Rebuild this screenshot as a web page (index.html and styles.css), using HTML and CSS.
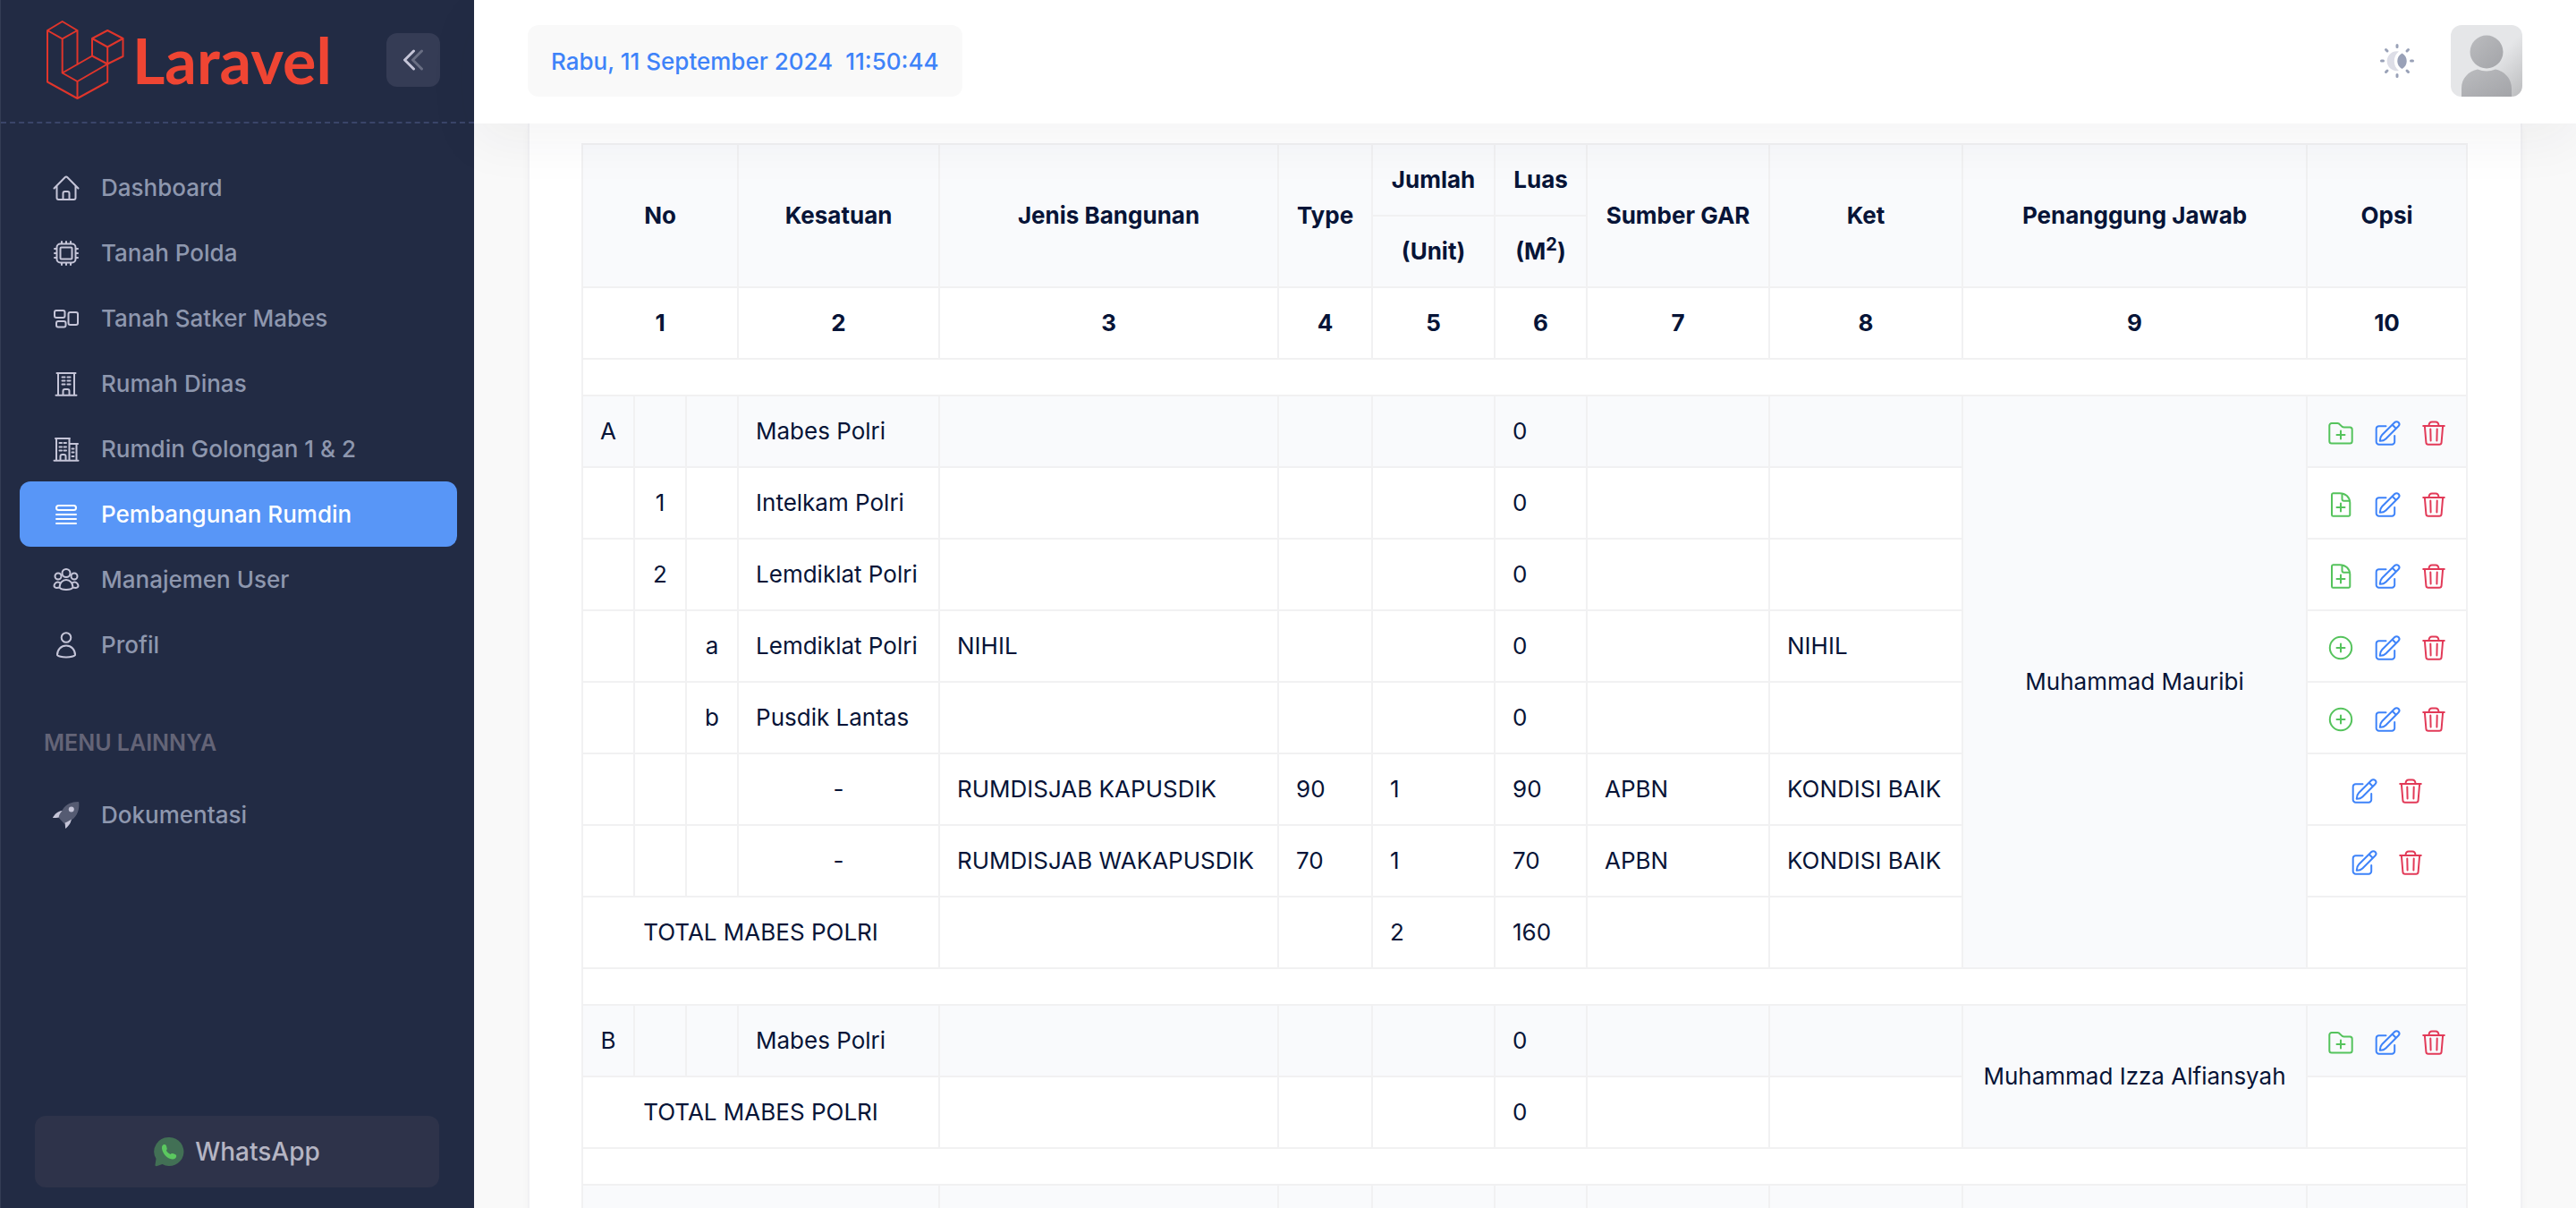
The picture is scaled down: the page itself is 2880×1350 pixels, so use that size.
FILE: index.html
```html
<!DOCTYPE html>
<html lang="id">
<head>
    <meta charset="utf-8">
    <meta name="viewport" content="width=device-width, initial-scale=1">
    <title>Pembangunan Rumdin</title>
    <link rel="stylesheet" href="styles.css">
</head>
<body>
    <!-- icon set -->
    <svg class="sprite" aria-hidden="true">
        <symbol id="i-home" viewBox="0 0 32 32"><path d="M2.5 16.5 14.6 4.2a2 2 0 0 1 2.8 0L29.5 16.500M5.500 14v13a2 2 0 0 0 2 2h17a2 2 0 0 0 2-2V14M12.500 29v-7a2 2 0 0 1 2-2h3a2 2 0 0 1 2 2v7"/></symbol>
        <symbol id="i-chip" viewBox="0 0 32 32"><rect x="5.5" y="5.5" width="21" height="21" rx="4"/><rect x="9.5" y="9.5" width="13" height="13" rx="1"/><path d="M11 5V3M16 5V3M21 5V3M11 29v-2M16 29v-2M21 29v-2M5 11H3M5 16H3M5 21H3M29 11h-2M29 16h-2M29 21h-2"/></symbol>
        <symbol id="i-category" viewBox="0 0 32 32"><rect x="3" y="7" width="11.5" height="8" rx="2"/><rect x="5" y="19" width="10.5" height="6.5" rx="2"/><rect x="18.5" y="9" width="10.5" height="14" rx="2"/></symbol>
        <symbol id="i-building" viewBox="0 0 32 32"><path d="M5.5 4h21M7 4v24.500M25 4v24.500M4.500 28.700h23M12.500 28v-4a2 2 0 0 1 2-2h3a2 2 0 0 1 2 2v4M11.500 8.500h3M11.500 12.500h3M11.500 16.500h3M17.500 8.500h3M17.500 12.500h3M17.500 16.500h3"/></symbol>
        <symbol id="i-buildings" viewBox="0 0 32 32"><path d="M4 4h16M5 4v24.500M19.500 4v24.500M19.500 10H29M27.500 10v18.500M2.500 28.700h27M9.500 28v-4a2 2 0 0 1 2-2h2a2 2 0 0 1 2 2v4M8.500 9h2.500M8.500 13.500h2.500M8.500 17.500h2.500M13.500 9h2.500M13.500 13.500h2.500M13.500 17.500h2.500M22.500 15.500h2M22.500 19.500h2M22.500 24h2"/></symbol>
        <symbol id="i-menu" viewBox="0 0 32 32"><rect x="5" y="6" width="22" height="5" rx="2.5"/><path d="M5 16h22M5 21h22M5 26h22"/></symbol>
        <symbol id="i-people" viewBox="0 0 32 32"><circle cx="16" cy="8.500" r="4.500"/><circle cx="7" cy="12" r="3.500"/><circle cx="25" cy="12" r="3.500"/><path d="M8.500 24.500c0-5 3.500-8.500 7.500-8.500s7.500 3.500 7.500 8.500c-2 3.300-13 3.300-15 0zM8.500 24.500c-3 .8-5.500 0-6-1.500 0-2.500 2-4.500 4-4.500 1.300 0 2.300.5 3 1.300M23.500 24.500c3 .8 5.500 0 6-1.500 0-2.500-2-4.500-4-4.500-1.300 0-2.300.5-3 1.300"/></symbol>
        <symbol id="i-user" viewBox="0 0 32 32"><circle cx="16" cy="7.500" r="5.300"/><path d="M6 27c0-6 4.300-10.500 10-10.500S26 21 26 27c-3 3.200-17 3.200-20 0z"/></symbol>
        <symbol id="i-rocket" viewBox="0 0 36 36"><path class="soft" d="M34 2c.8 8-1.500 17-9 22-2 1.500-4 2.800-6.500 4.500-1.500 1-2.500.5-3.500-.5l-6.500-7c-.8-1-.8-2 0-3l5-7C18 4 25 1.300 32.500 1.200c1 0 1.400.2 1.500.8z"/><circle class="solid" cx="24.500" cy="10.800" r="3.400"/><path class="solid" d="M13 12.500c-6 .5-9.500 4.500-12 9 3 0 6-.5 7.500-.5.300-3.500 2.500-6 4.500-8.500zM24.500 23c-.5 5.500-4.500 9.500-7.500 12 0-3-.5-5-.5-7.300C19.500 26.500 22 25 24.500 23z"/></symbol>
        <symbol id="i-folder" viewBox="0 0 32 32"><path d="M6 5h6.500c3 0 3.500 4.500 7 4.500h6.700A2.500 2.500 0 0 1 28.700 12v13a2.500 2.500 0 0 1-2.500 2.500H5.800A2.500 2.500 0 0 1 3.300 25V7.500A2.500 2.500 0 0 1 6 5zM16 13.500v9M11.500 18h9"/></symbol>
        <symbol id="i-file" viewBox="0 0 32 32"><path d="M7.500 3.200h7.500c6 0 11 4 11.300 10.500v13.500a1.600 1.600 0 0 1-1.600 1.600H7.500A1.600 1.600 0 0 1 6 27.200V4.800a1.600 1.600 0 0 1 1.500-1.600zM17.500 3.700v6a2 2 0 0 0 2 2h5.800M16 14.500v9M11.500 19h9"/></symbol>
        <symbol id="i-plus" viewBox="0 0 32 32"><circle cx="16" cy="16" r="12.200"/><path d="M16 11.500v9M11.500 16h9"/></symbol>
        <symbol id="i-edit" viewBox="0 0 32 32"><path d="M14.500 8.200H6.700a3 3 0 0 0-3 3v14.500a3 3 0 0 0 3 3h14.500a3 3 0 0 0 3-3V19M7.700 24.700c0-3 1-5.200 2.500-6.700L24.300 4a2.900 2.900 0 0 1 4.200 4.200L14.300 22.500c-1.700 1.700-3.600 2.300-6.600 2.200zM21.700 6.800l4 4"/></symbol>
        <symbol id="i-trash" viewBox="0 0 32 32"><path d="M4.200 8h23.600M10.500 7.500c.2-2.500 1.300-4 3.500-4h4c2.200 0 3.300 1.500 3.500 4M5.900 8.500l1.500 18a2.500 2.500 0 0 0 2.500 2.300h12.200a2.500 2.500 0 0 0 2.500-2.300l1.500-18M12.300 11.500l.3 13M19.700 11.500l-.3 13"/></symbol>
    </svg>

    <div class="app">
        <aside class="sidebar">
            <div class="sidebar-logo">
                <a href="#" class="brand">
                    <svg class="brand-mark" viewBox="52 22 88 90" aria-hidden="true">
                        <path d="M69.700 24 86.500 34 69.700 43.300 53 34zM53 34v57.500L86.500 110 120.200 91.500V52.500M69.700 43.300v38.200L86.500 91v19M86.500 91l33.700-19.500M69.700 81.500 103 62.500l17.200 9 17.300-8.500V43M86.500 34v38M120.200 34 137.500 43l-17.300 9.500L103 43zM103 43v19.500"/>
                    </svg>
                    <span class="brand-name">Laravel</span>
                </a>
                <button type="button" class="toggle" aria-label="Toggle sidebar">
                    <svg viewBox="0 0 24 24" aria-hidden="true"><path class="far" d="M21.500 2l-10 10 10 10"/><path class="near" d="M12.500 2 2.500 12l10 10"/></svg>
                </button>
            </div>

            <nav class="menu">
                <a href="#" class="menu-link"><svg class="icon"><use href="#i-home"/></svg>Dashboard</a>
                <a href="#" class="menu-link"><svg class="icon"><use href="#i-chip"/></svg>Tanah Polda</a>
                <a href="#" class="menu-link"><svg class="icon"><use href="#i-category"/></svg>Tanah Satker Mabes</a>
                <a href="#" class="menu-link"><svg class="icon"><use href="#i-building"/></svg>Rumah Dinas</a>
                <a href="#" class="menu-link"><svg class="icon"><use href="#i-buildings"/></svg>Rumdin Golongan 1 &amp; 2</a>
                <a href="#" class="menu-link active" aria-current="page"><svg class="icon"><use href="#i-menu"/></svg>Pembangunan Rumdin</a>
                <a href="#" class="menu-link"><svg class="icon"><use href="#i-people"/></svg>Manajemen User</a>
                <a href="#" class="menu-link"><svg class="icon"><use href="#i-user"/></svg>Profil</a>
                <h2 class="menu-heading">MENU LAINNYA</h2>
                <a href="#" class="menu-link"><svg class="icon rocket"><use href="#i-rocket"/></svg>Dokumentasi</a>
            </nav>

            <a href="#" class="whatsapp">
                <svg viewBox="0 0 34 34" aria-hidden="true">
                    <path class="bubble" d="M17.500 1a16 16 0 1 1-8 29.900L3 33.200c-1.200.3-1.800-.5-1.500-1.700l1-6.500A16 16 0 0 1 17.500 1z"/>
                    <path class="phone" d="M9 13.500c-.3-3 1-4.500 2.700-4.500 1.200 0 2 .5 2.300 1.800l.7 2.600c.2.800-.3 1.500-.8 2.200.8 2 2.400 3.500 4.600 4.400.8-1 1.700-1.200 2.700-.9l2.600 1c1.300.6 1.700 1.700 1.200 3-.6 1.700-2.300 2.700-4.500 2.400-5.700-.8-10.600-6-11.500-12z"/>
                </svg>
                WhatsApp
            </a>
        </aside>

        <div class="page">
            <header class="topbar">
                <div class="clock"><span>Rabu, 11 September 2024</span><span>11:50:44</span></div>
                <div class="topbar-tools">
                    <button type="button" class="theme" aria-label="Theme mode">
                        <svg viewBox="0 0 40 40" aria-hidden="true">
                            <path class="moon" d="M22 9.500a11 11 0 1 0 0 21.500c-7-5-7-16.500 0-21.500z"/>
                            <path class="core" d="M25.500 11.500c7 4 7 13.500 0 17.500-7-4-7-13.500 0-17.500z"/>
                            <path class="rays" d="M20 2.500v2M20 35.500v2M2.500 20h2M35.500 20h2M7.500 7.500l1.500 1.500M31 31l1.500 1.500M32.500 7.500 31 9M9 31l-1.500 1.500"/>
                        </svg>
                    </button>
                    <button type="button" class="avatar" aria-label="Akun">
                        <svg viewBox="0 0 80 80" aria-hidden="true">
                            <defs>
                                <linearGradient id="avatar-bg" x2="1" y2="1"><stop offset=".55" stop-color="#e5e6e8"/><stop offset="1" stop-color="#bbbcbe"/></linearGradient>
                                <linearGradient id="avatar-fg" x2="1" y2="1"><stop offset="0" stop-color="#bbbcbf"/><stop offset="1" stop-color="#a3a4a8"/></linearGradient>
                            </defs>
                            <rect width="80" height="80" fill="url(#avatar-bg)"/>
                            <circle cx="40" cy="30" r="18.500" fill="url(#avatar-fg)"/>
                            <path d="M30 49.500q10 4 20 0c10 2 18 10 18 21V80H12v-9.500c0-11 8-19 18-21z" fill="url(#avatar-fg)"/>
                        </svg>
                    </button>
                </div>
            </header>

            <main class="card">
                <table class="report">
                    <colgroup>
                        <col class="c-no"><col class="c-no"><col class="c-no">
                        <col class="c-kesatuan"><col class="c-jenis"><col class="c-type">
                        <col class="c-jumlah"><col class="c-luas"><col class="c-sumber">
                        <col class="c-ket"><col class="c-pj"><col class="c-opsi">
                    </colgroup>
                    <thead>
                        <tr class="shade">
                            <th colspan="3" rowspan="2">No</th>
                            <th rowspan="2">Kesatuan</th>
                            <th rowspan="2">Jenis Bangunan</th>
                            <th rowspan="2">Type</th>
                            <th>Jumlah</th>
                            <th>Luas</th>
                            <th rowspan="2">Sumber GAR</th>
                            <th rowspan="2">Ket</th>
                            <th rowspan="2">Penanggung Jawab</th>
                            <th rowspan="2">Opsi</th>
                        </tr>
                        <tr class="shade"><th>(Unit)</th><th>(M<sup>2</sup>)</th></tr>
                        <tr>
                            <th colspan="3">1</th><th>2</th><th>3</th><th>4</th><th>5</th>
                            <th>6</th><th>7</th><th>8</th><th>9</th><th>10</th>
                        </tr>
                    </thead>
                    <tbody>
                        <tr class="spacer"><td colspan="12"></td></tr>
                        <tr class="shade">
                            <td class="mid">A</td><td></td><td></td><td>Mabes Polri</td><td></td><td></td><td></td><td>0</td><td></td><td></td>
                            <td rowspan="8" class="pj">Muhammad Mauribi</td>
                            <td><div class="actions">
                                <button type="button" class="add" aria-label="Tambah"><svg class="icon"><use href="#i-folder"/></svg></button>
                                <button type="button" class="edit" aria-label="Ubah"><svg class="icon"><use href="#i-edit"/></svg></button>
                                <button type="button" class="delete" aria-label="Hapus"><svg class="icon"><use href="#i-trash"/></svg></button>
                            </div></td>
                        </tr>
                        <tr>
                            <td></td><td class="mid">1</td><td></td><td>Intelkam Polri</td><td></td><td></td><td></td><td>0</td><td></td><td></td>
                            <td><div class="actions">
                                <button type="button" class="add" aria-label="Tambah"><svg class="icon"><use href="#i-file"/></svg></button>
                                <button type="button" class="edit" aria-label="Ubah"><svg class="icon"><use href="#i-edit"/></svg></button>
                                <button type="button" class="delete" aria-label="Hapus"><svg class="icon"><use href="#i-trash"/></svg></button>
                            </div></td>
                        </tr>
                        <tr>
                            <td></td><td class="mid">2</td><td></td><td>Lemdiklat Polri</td><td></td><td></td><td></td><td>0</td><td></td><td></td>
                            <td><div class="actions">
                                <button type="button" class="add" aria-label="Tambah"><svg class="icon"><use href="#i-file"/></svg></button>
                                <button type="button" class="edit" aria-label="Ubah"><svg class="icon"><use href="#i-edit"/></svg></button>
                                <button type="button" class="delete" aria-label="Hapus"><svg class="icon"><use href="#i-trash"/></svg></button>
                            </div></td>
                        </tr>
                        <tr>
                            <td></td><td></td><td class="mid">a</td><td>Lemdiklat Polri</td><td>NIHIL</td><td></td><td></td><td>0</td><td></td><td>NIHIL</td>
                            <td><div class="actions">
                                <button type="button" class="add" aria-label="Tambah"><svg class="icon"><use href="#i-plus"/></svg></button>
                                <button type="button" class="edit" aria-label="Ubah"><svg class="icon"><use href="#i-edit"/></svg></button>
                                <button type="button" class="delete" aria-label="Hapus"><svg class="icon"><use href="#i-trash"/></svg></button>
                            </div></td>
                        </tr>
                        <tr>
                            <td></td><td></td><td class="mid">b</td><td>Pusdik Lantas</td><td></td><td></td><td></td><td>0</td><td></td><td></td>
                            <td><div class="actions">
                                <button type="button" class="add" aria-label="Tambah"><svg class="icon"><use href="#i-plus"/></svg></button>
                                <button type="button" class="edit" aria-label="Ubah"><svg class="icon"><use href="#i-edit"/></svg></button>
                                <button type="button" class="delete" aria-label="Hapus"><svg class="icon"><use href="#i-trash"/></svg></button>
                            </div></td>
                        </tr>
                        <tr>
                            <td></td><td></td><td></td><td class="mid">-</td><td>RUMDISJAB KAPUSDIK</td><td>90</td><td>1</td><td>90</td><td>APBN</td><td>KONDISI BAIK</td>
                            <td><div class="actions">
                                <button type="button" class="edit" aria-label="Ubah"><svg class="icon"><use href="#i-edit"/></svg></button>
                                <button type="button" class="delete" aria-label="Hapus"><svg class="icon"><use href="#i-trash"/></svg></button>
                            </div></td>
                        </tr>
                        <tr>
                            <td></td><td></td><td></td><td class="mid">-</td><td>RUMDISJAB WAKAPUSDIK</td><td>70</td><td>1</td><td>70</td><td>APBN</td><td>KONDISI BAIK</td>
                            <td><div class="actions">
                                <button type="button" class="edit" aria-label="Ubah"><svg class="icon"><use href="#i-edit"/></svg></button>
                                <button type="button" class="delete" aria-label="Hapus"><svg class="icon"><use href="#i-trash"/></svg></button>
                            </div></td>
                        </tr>
                        <tr><td colspan="4" class="mid">TOTAL MABES POLRI</td><td></td><td></td><td>2</td><td>160</td><td></td><td></td><td></td></tr>
                        <tr class="spacer"><td colspan="12"></td></tr>
                        <tr class="shade">
                            <td class="mid">B</td><td></td><td></td><td>Mabes Polri</td><td></td><td></td><td></td><td>0</td><td></td><td></td>
                            <td rowspan="2" class="pj">Muhammad Izza Alfiansyah</td>
                            <td><div class="actions">
                                <button type="button" class="add" aria-label="Tambah"><svg class="icon"><use href="#i-folder"/></svg></button>
                                <button type="button" class="edit" aria-label="Ubah"><svg class="icon"><use href="#i-edit"/></svg></button>
                                <button type="button" class="delete" aria-label="Hapus"><svg class="icon"><use href="#i-trash"/></svg></button>
                            </div></td>
                        </tr>
                        <tr><td colspan="4" class="mid">TOTAL MABES POLRI</td><td></td><td></td><td></td><td>0</td><td></td><td></td><td></td></tr>
                        <tr class="spacer"><td colspan="12"></td></tr>
                        <tr class="shade"><td colspan="4"></td><td></td><td></td><td></td><td></td><td></td><td></td><td></td><td></td></tr>
                    </tbody>
                </table>
            </main>
        </div>
    </div>
</body>
</html>
```
FILE: styles.css
```css
* {
    box-sizing: border-box;
}
body {
    margin: 0;
    font: 400 26px/39px Inter, "Noto Sans", sans-serif;
    color: #071437;
    background: #f9f9f9;
}
a {
    color: inherit;
    text-decoration: none;
}
button {
    display: flex;
    align-items: center;
    justify-content: center;
    padding: 0;
    border: 0;
    background: none;
    cursor: pointer;
}
svg {
    fill: none;
    stroke-linecap: round;
    stroke-linejoin: round;
}
.sprite {
    display: none;
}
.icon {
    width: 32px;
    height: 32px;
    flex: none;
    stroke: currentColor;
    stroke-width: 2px;
}
.app {
    display: flex;
    height: 100vh;
    overflow: hidden;
}

/* sidebar */
.sidebar {
    display: flex;
    flex-direction: column;
    flex: none;
    width: 530px;
    background: #222b44;
    border-left: 1px solid #343d55;
}
.sidebar-logo {
    display: flex;
    align-items: center;
    justify-content: space-between;
    height: 138px;
    padding: 0 38px 2px 51px;
    border-bottom: 2px dashed #3a4569;
}
.brand {
    display: flex;
    align-items: center;
    gap: 8px;
}
.brand-mark {
    width: 88px;
    height: 90px;
    stroke: #e0352b;
    stroke-width: 2px;
}
.brand-name {
    font: 700 70px/80px Lato, sans-serif;
    color: #ef4533;
}
.toggle {
    width: 60px;
    height: 60px;
    border-radius: 12px;
    background: #353c55;
}
.toggle svg {
    width: 24px;
    height: 24px;
    stroke: #c5c5d8;
    stroke-width: 3px;
}
.toggle .far {
    stroke: #696e83;
}
.menu {
    display: flex;
    flex-direction: column;
    flex: 1;
    padding: 35px 19px 0 21px;
}
.menu-link {
    display: flex;
    align-items: center;
    gap: 23px;
    padding: 17px 36px;
    border-radius: 12px;
    font-weight: 500;
    color: #8e97ae;
}
.menu-link .icon {
    color: #c5c5d8;
}
.menu-link.active {
    background: #5896f7;
}
.menu-link.active,
.menu-link.active .icon {
    color: #fff;
}
.menu-heading {
    margin: 0;
    padding: 54px 27px 24px;
    font-size: 25px;
    font-weight: 600;
    color: #646477;
}
.soft {
    fill: #555b72;
    stroke: none;
}
.solid {
    fill: #c5c5d8;
    stroke: none;
}
.whatsapp {
    display: flex;
    align-items: center;
    justify-content: center;
    gap: 12px;
    height: 80px;
    margin: 0 39px 23px 38px;
    border-radius: 12px;
    font-size: 28px;
    font-weight: 500;
    color: #b5b5c3;
    background: #2e334a;
}
.whatsapp svg {
    width: 34px;
    height: 34px;
}
.bubble {
    fill: #427055;
}
.phone {
    fill: #5bc85f;
}

/* top bar */
.page {
    flex: 1;
    min-width: 0;
}
.topbar {
    position: relative;
    z-index: 1;
    display: flex;
    align-items: center;
    justify-content: space-between;
    height: 138px;
    padding: 0 60px 2px;
    background: #fff;
    box-shadow: 0 20px 60px rgba(40, 40, 60, .05);
}
.clock {
    display: flex;
    align-items: center;
    gap: 14px;
    height: 80px;
    padding: 0 26px;
    border-radius: 12px;
    font-weight: 500;
    color: #3e83f9;
    background: #f9f9f9;
}
.topbar-tools {
    display: flex;
    align-items: center;
    gap: 40px;
}
.theme svg {
    width: 40px;
    height: 40px;
}
.moon {
    fill: #dddee7;
}
.core {
    fill: #99a1b7;
}
.rays {
    stroke: #99a1b7;
    stroke-width: 3px;
}
.avatar {
    width: 80px;
    height: 80px;
    border-radius: 12px;
    overflow: hidden;
}

/* report table */
.card {
    margin: 0 60px;
    padding: 22px 60px 60px 58px;
    background: #fff;
    border: 1px solid #f1f1f4;
    border-width: 0 2px;
    box-shadow: 0 6px 8px rgba(0, 0, 0, .03);
}
.report {
    width: 100%;
    table-layout: fixed;
    border-collapse: collapse;
}
.c-no { width: 58px; }
.c-kesatuan { width: 225px; }
.c-jenis { width: 379px; }
.c-type { width: 105px; }
.c-jumlah { width: 137px; }
.c-luas { width: 103px; }
.c-sumber { width: 204px; }
.c-ket { width: 216px; }
.c-pj { width: 385px; }
.c-opsi { width: 179px; }
.report th,
.report td {
    height: 80px;
    padding: 0 19px 2px;
    border: 2px solid #f1f1f2;
    text-align: left;
    white-space: nowrap;
}
.report th {
    padding: 0 0 2px;
    font-weight: 700;
    text-align: center;
}
.report .shade,
.report .pj {
    background: #f9fafc;
}
.report .mid,
.report .pj {
    padding: 0 0 2px;
    text-align: center;
}
.report .spacer td {
    height: 41px;
    padding: 0;
}
sup {
    position: relative;
    top: -10px;
    font-size: 20px;
    line-height: 0;
    vertical-align: baseline;
}
.actions {
    display: flex;
    justify-content: center;
    gap: 20px;
    padding-top: 6px;
}
.add { color: #55c35c; }
.edit { color: #3e83f9; }
.delete { color: #e23a58; }
```
